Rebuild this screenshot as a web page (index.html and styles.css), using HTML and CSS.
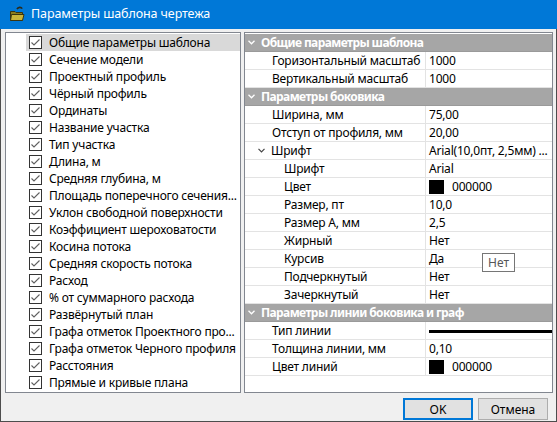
FILE: index.html
```html
<!DOCTYPE html>
<html lang="ru">
<head>
<meta charset="utf-8">
<title>Параметры шаблона чертежа</title>
<link rel="stylesheet" href="styles.css">
</head>
<body>
<div class="window">
  <div class="titlebar">
    <svg class="app-icon" width="16" height="16" viewBox="0 0 16 16">
      <path d="M8 3.2 C9 1 12 0.8 13.2 2.6" fill="none" stroke="#2b2b1a" stroke-width="1.6"/>
      <path d="M1.5 5.5 H6 L7 6.5 H13.5 V14.5 H1.5 Z" fill="#8c7d1c" stroke="#3a3510" stroke-width="1"/>
      <path d="M2.5 8.5 H15 L13.5 14.5 H1.5 Z" fill="#c9b53a" stroke="#3a3510" stroke-width="1"/>
    </svg>
    <span class="title">Параметры шаблона чертежа</span>
  </div>
  <div class="body">
    <div class="panes">
      <ul class="checklist">
        <li class="item selected"><span class="cb"><svg width="13" height="13" viewBox="0 0 13 13"><polyline points="2.5,6.5 5,9 10.5,3.5"/></svg></span>Общие параметры шаблона</li>
        <li class="item"><span class="cb"><svg width="13" height="13" viewBox="0 0 13 13"><polyline points="2.5,6.5 5,9 10.5,3.5"/></svg></span>Сечение модели</li>
        <li class="item"><span class="cb"><svg width="13" height="13" viewBox="0 0 13 13"><polyline points="2.5,6.5 5,9 10.5,3.5"/></svg></span>Проектный профиль</li>
        <li class="item"><span class="cb"><svg width="13" height="13" viewBox="0 0 13 13"><polyline points="2.5,6.5 5,9 10.5,3.5"/></svg></span>Чёрный профиль</li>
        <li class="item"><span class="cb"><svg width="13" height="13" viewBox="0 0 13 13"><polyline points="2.5,6.5 5,9 10.5,3.5"/></svg></span>Ординаты</li>
        <li class="item"><span class="cb"><svg width="13" height="13" viewBox="0 0 13 13"><polyline points="2.5,6.5 5,9 10.5,3.5"/></svg></span>Название участка</li>
        <li class="item"><span class="cb"><svg width="13" height="13" viewBox="0 0 13 13"><polyline points="2.5,6.5 5,9 10.5,3.5"/></svg></span>Тип участка</li>
        <li class="item"><span class="cb"><svg width="13" height="13" viewBox="0 0 13 13"><polyline points="2.5,6.5 5,9 10.5,3.5"/></svg></span>Длина, м</li>
        <li class="item"><span class="cb"><svg width="13" height="13" viewBox="0 0 13 13"><polyline points="2.5,6.5 5,9 10.5,3.5"/></svg></span>Средняя глубина, м</li>
        <li class="item"><span class="cb"><svg width="13" height="13" viewBox="0 0 13 13"><polyline points="2.5,6.5 5,9 10.5,3.5"/></svg></span>Площадь поперечного сечения...</li>
        <li class="item"><span class="cb"><svg width="13" height="13" viewBox="0 0 13 13"><polyline points="2.5,6.5 5,9 10.5,3.5"/></svg></span>Уклон свободной поверхности</li>
        <li class="item"><span class="cb"><svg width="13" height="13" viewBox="0 0 13 13"><polyline points="2.5,6.5 5,9 10.5,3.5"/></svg></span>Коэффициент шероховатости</li>
        <li class="item"><span class="cb"><svg width="13" height="13" viewBox="0 0 13 13"><polyline points="2.5,6.5 5,9 10.5,3.5"/></svg></span>Косина потока</li>
        <li class="item"><span class="cb"><svg width="13" height="13" viewBox="0 0 13 13"><polyline points="2.5,6.5 5,9 10.5,3.5"/></svg></span>Средняя скорость потока</li>
        <li class="item"><span class="cb"><svg width="13" height="13" viewBox="0 0 13 13"><polyline points="2.5,6.5 5,9 10.5,3.5"/></svg></span>Расход</li>
        <li class="item"><span class="cb"><svg width="13" height="13" viewBox="0 0 13 13"><polyline points="2.5,6.5 5,9 10.5,3.5"/></svg></span>% от суммарного расхода</li>
        <li class="item"><span class="cb"><svg width="13" height="13" viewBox="0 0 13 13"><polyline points="2.5,6.5 5,9 10.5,3.5"/></svg></span>Развёрнутый план</li>
        <li class="item"><span class="cb"><svg width="13" height="13" viewBox="0 0 13 13"><polyline points="2.5,6.5 5,9 10.5,3.5"/></svg></span>Графа отметок Проектного про...</li>
        <li class="item"><span class="cb"><svg width="13" height="13" viewBox="0 0 13 13"><polyline points="2.5,6.5 5,9 10.5,3.5"/></svg></span>Графа отметок Черного профиля</li>
        <li class="item"><span class="cb"><svg width="13" height="13" viewBox="0 0 13 13"><polyline points="2.5,6.5 5,9 10.5,3.5"/></svg></span>Расстояния</li>
        <li class="item"><span class="cb"><svg width="13" height="13" viewBox="0 0 13 13"><polyline points="2.5,6.5 5,9 10.5,3.5"/></svg></span>Прямые и кривые плана</li>
      </ul>
      <div class="props">
        <div class="group"><svg class="chev" width="7" height="5" viewBox="0 0 7 5"><polyline points="0.5,0.8 3.5,3.8 6.5,0.8"/></svg>Общие параметры шаблона</div>
        <div class="row"><div class="name l1">Горизонтальный масштаб</div><div class="val">1000</div></div>
        <div class="row"><div class="name l1">Вертикальный масштаб</div><div class="val">1000</div></div>
        <div class="group"><svg class="chev" width="7" height="5" viewBox="0 0 7 5"><polyline points="0.5,0.8 3.5,3.8 6.5,0.8"/></svg>Параметры боковика</div>
        <div class="row"><div class="name l1">Ширина, мм</div><div class="val">75,00</div></div>
        <div class="row"><div class="name l1">Отступ от профиля, мм</div><div class="val">20,00</div></div>
        <div class="row"><div class="name l1 parent"><svg class="subchev" width="7" height="5" viewBox="0 0 7 5"><polyline points="0.5,0.8 3.5,3.8 6.5,0.8"/></svg>Шрифт</div><div class="val">Arial(10,0пт, 2,5мм) ...</div></div>
        <div class="row"><div class="name l2">Шрифт</div><div class="val">Arial</div></div>
        <div class="row"><div class="name l2">Цвет</div><div class="val"><span class="swatch"></span>000000</div></div>
        <div class="row"><div class="name l2">Размер, пт</div><div class="val">10,0</div></div>
        <div class="row"><div class="name l2">Размер А, мм</div><div class="val">2,5</div></div>
        <div class="row"><div class="name l2">Жирный</div><div class="val">Нет</div></div>
        <div class="row"><div class="name l2">Курсив</div><div class="val">Да</div></div>
        <div class="row"><div class="name l2">Подчеркнутый</div><div class="val">Нет</div></div>
        <div class="row"><div class="name l2">Зачеркнутый</div><div class="val">Нет</div></div>
        <div class="group"><svg class="chev" width="7" height="5" viewBox="0 0 7 5"><polyline points="0.5,0.8 3.5,3.8 6.5,0.8"/></svg>Параметры линии боковика и граф</div>
        <div class="row"><div class="name l1">Тип линии</div><div class="val linecell"><span class="linetype"></span></div></div>
        <div class="row"><div class="name l1">Толщина линии, мм</div><div class="val">0,10</div></div>
        <div class="row"><div class="name l1">Цвет линий</div><div class="val"><span class="swatch"></span>000000</div></div>
      </div>
    </div>
    <div class="buttons">
      <button class="btn default">OK</button>
      <button class="btn">Отмена</button>
    </div>
  </div>
  <div class="tooltip">Нет</div>
</div>
</body>
</html>
```
FILE: styles.css
```css
* { box-sizing: border-box; }
html, body { margin: 0; padding: 0; }
body {
  font-family: "Noto Sans", "Open Sans", sans-serif;
  font-size: 12px;
  letter-spacing: -0.2px;
  color: #000;
  background: #f0f0f0;
}
.window {
  position: relative;
  width: 557px;
  height: 422px;
  display: flex;
  flex-direction: column;
}
.titlebar {
  height: 29px;
  background: #0078d7;
  color: #fff;
  display: flex;
  align-items: center;
  padding-left: 9px;
  gap: 6px;
}
.app-icon { display: block; margin-top: -2px; }
.title { font-size: 12.5px; line-height: 16px; margin-top: -1px; letter-spacing: -0.1px; }
.body {
  flex: 1;
  background: #f0f0f0;
  border: 1px solid #4d4d4d;
  border-top: none;
  padding: 3px 3px 0 4px;
  display: flex;
  flex-direction: column;
}
.panes {
  display: flex;
  gap: 3px;
  height: 361px;
}
.checklist {
  list-style: none;
  margin: 0;
  padding: 1px 0;
  width: 236px;
  background: #fff;
  border: 1px solid #828790;
  overflow: hidden;
}
.item {
  height: 17px;
  margin-left: 20px;
  padding-left: 3px;
  display: flex;
  align-items: center;
  white-space: nowrap;
  line-height: 17px;
}
.item.selected { background: #d9d9d9; }
.cb {
  width: 13px;
  height: 13px;
  border: 1px solid #333;
  background: #fff;
  margin-right: 7px;
  position: relative;
  flex: none;
}
.cb svg { position: absolute; left: -1px; top: -1px; }
.cb polyline { fill: none; stroke: #5f5f5f; stroke-width: 1.1; }
.props {
  flex: 1;
  background: #fff;
  border: 1px solid #828790;
  padding-top: 1px;
  overflow: hidden;
}
.group {
  height: 18px;
  background: #a6a6a6;
  color: #fff;
  font-weight: bold;
  letter-spacing: -0.6px;
  display: flex;
  align-items: center;
  padding-left: 2px;
  border-bottom: 1px solid #9a9a9a;
  white-space: nowrap;
}
.chev { margin-right: 6px; margin-left: 1px; }
.chev polyline { fill: none; stroke: #fff; stroke-width: 1.3; }
.subchev { margin-right: 6px; margin-left: -14px; }
.subchev polyline { fill: none; stroke: #444; stroke-width: 1.2; }
.row {
  height: 18px;
  display: grid;
  grid-template-columns: 181px 1fr;
  border-bottom: 1px solid #e3e3e3;
}
.name {
  border-right: 1px solid #e3e3e3;
  display: flex;
  align-items: center;
  white-space: nowrap;
  overflow: hidden;
}
.l1 { padding-left: 27px; }
.l2 { padding-left: 39px; }
.val {
  display: flex;
  align-items: center;
  padding-left: 3px;
  white-space: nowrap;
}
.swatch {
  width: 15px;
  height: 14px;
  background: #000;
  margin-right: 8px;
}
.linecell { padding-left: 3px; padding-right: 0; }
.linetype {
  flex: 1;
  height: 3px;
  background: #000;
  margin-top: 1px;
}
.buttons {
  display: flex;
  justify-content: flex-end;
  gap: 5px;
  margin-top: 5px;
  padding-right: 5px;
}
.btn {
  width: 70px;
  height: 22px;
  font-family: inherit;
  font-size: 12px;
  background: #e1e1e1;
  border: 1px solid #adadad;
  color: #000;
  padding: 0;
}
.btn.default { border: 2px solid #0078d7; }
.tooltip {
  position: absolute;
  left: 482px;
  top: 253px;
  width: 33px;
  height: 19px;
  background: #fff;
  border: 1px solid #767676;
  color: #575757;
  font-size: 12px;
  letter-spacing: 0;
  display: flex;
  align-items: center;
  justify-content: center;
}
```
